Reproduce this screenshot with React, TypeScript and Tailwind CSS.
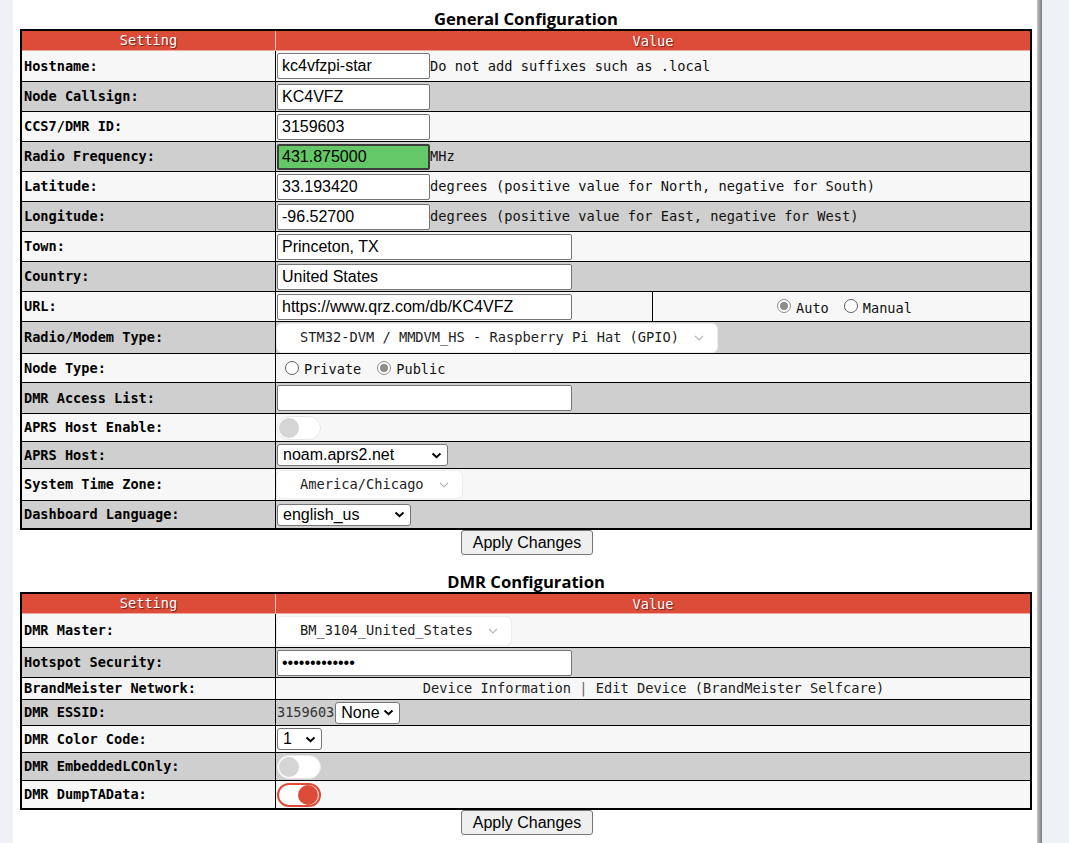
import React from "react";

const mono = "font-['DejaVu_Sans_Mono',monospace]";
const sans = "font-['Liberation_Sans',Arial,sans-serif]";

function Row({label, h, gray, first, children}: {label: string, h: string, gray?: boolean, first?: boolean, children?: React.ReactNode}) {
    return (
        <div className={`flex ${h} ${first ? '' : 'border-t border-black'} ${gray ? 'bg-[#cfcfcf]' : 'bg-[#f7f7f7]'}`}>
            <div className={`flex w-[254px] shrink-0 items-center border-r border-black pl-[2px] text-[13.6px] font-bold text-black ${mono}`}>
                {label}
            </div>
            <div className="flex min-w-0 flex-1 items-center pl-[1px]">{children}</div>
        </div>
    )
}

function TextInput({value, wide, green, password}: {value: string, wide?: boolean, green?: boolean, password?: boolean}) {
    return (
        <input
            type={password ? "password" : "text"}
            defaultValue={value}
            className={`h-[26px] shrink-0 rounded-[2px] text-[16px] text-black outline-none ${sans} ${wide ? 'w-[295px]' : 'w-[153px]'} ${green ? 'border-2 border-[#3d3d3d] bg-[#64c866] px-[3px]' : 'border border-[#767676] bg-white px-[4px]'}`}
        />
    )
}

function Desc({children}: {children: React.ReactNode}) {
    return <span className={`whitespace-pre text-[13.7px] text-[#111] ${mono}`}>{children}</span>
}

function Radio({checked, label}: {checked?: boolean, label: string}) {
    return (
        <span className="inline-flex items-center">
            <span className={`mr-[5px] inline-flex h-[14px] w-[14px] items-center justify-center rounded-full border bg-white ${checked ? 'border-[#8d8d8d]' : 'border-[#5f5f5f]'}`}>
                {checked ? <span className="h-[8px] w-[8px] rounded-full bg-[#8d8d8d]"/> : null}
            </span>
            <span className={`mt-[3px] text-[13.6px] text-[#111] ${mono}`}>{label}</span>
        </span>
    )
}

function Toggle({on}: {on?: boolean}) {
    return (
        <span className={`flex h-[24px] w-[44px] items-center rounded-full bg-white ${on ? 'justify-end border-2 border-[#dd4c39] pr-[1px]' : 'border border-[#e6e6e6] pl-[1px]'}`}>
            <span className={`h-[20px] w-[20px] rounded-full ${on ? 'bg-[#dd4c39]' : 'bg-[#d5d5d5]'}`}/>
        </span>
    )
}

function NativeSelect({value, w}: {value: string, w: string}) {
    return (
        <div className={`flex h-[22px] shrink-0 items-center justify-between rounded-[3px] border border-[#767676] bg-white pl-[5px] pr-[5px] ${w}`}>
            <span className={`text-[16px] leading-none text-black ${sans}`}>{value}</span>
            <svg width="11" height="7" viewBox="0 0 11 7">
                <polyline points="1.5,1.5 5.5,5.2 9.5,1.5" fill="none" stroke="#000" strokeWidth="2"/>
            </svg>
        </div>
    )
}

function FancySelect({value, h}: {value: string, h: string}) {
    return (
        <div className={`flex ${h} items-center rounded-[5px] bg-white pl-[23px] pr-[13px] shadow-[0_0_0_1px_#ececec]`}>
            <span className={`whitespace-pre text-[13.7px] text-[#222] ${mono}`}>{value}</span>
            <svg className="ml-[15px]" width="10" height="6" viewBox="0 0 10 6">
                <polyline points="1,0.8 5,4.8 9,0.8" fill="none" stroke="#b3b3b3" strokeWidth="1.2"/>
            </svg>
        </div>
    )
}

function Header() {
    return (
        <div className={`flex h-[20px] border-b border-[#eea89e] bg-[#dd4c39] text-[13.6px] text-white ${mono} [text-shadow:1px_1px_1px_rgba(0,0,0,0.55)]`}>
            <div className="flex w-[254px] shrink-0 items-center justify-center border-r border-[#f2c4bd]">Setting</div>
            <div className="flex flex-1 items-center justify-center pt-[1px]">Value</div>
        </div>
    )
}

function Title({children}: {children: React.ReactNode}) {
    return (
        <div className="pl-[2px] pt-[9px] text-center font-['Open_Sans',sans-serif] text-[16.6px] font-bold leading-[20px] text-black">
            {children}
        </div>
    )
}

function ApplyButton() {
    return (
        <div className="flex justify-center pl-[4px]">
            <button type="button"
                    className={`h-[25px] w-[132px] rounded-[3px] border border-[#767676] bg-[#efefef] text-[16px] leading-none text-black ${sans}`}>
                Apply Changes
            </button>
        </div>
    )
}

export default function App() {
    return (
        <div className="flex min-h-screen bg-[#eef2f7]">
            <div className="w-[13px] shrink-0"/>
            <div className="w-[1024px] shrink-0 bg-white">
                {/* General */}
                <Title>General Configuration</Title>
                <div className="ml-[7px] w-[1012px] border-2 border-black">
                    <Header/>
                    <Row label="Hostname:" h="h-[30px]" first>
                        <TextInput value="kc4vfzpi-star"/>
                        <Desc>Do not add suffixes such as .local</Desc>
                    </Row>
                    <Row label="Node Callsign:" h="h-[30px]" gray>
                        <TextInput value="KC4VFZ"/>
                    </Row>
                    <Row label="CCS7/DMR ID:" h="h-[30px]">
                        <TextInput value="3159603"/>
                    </Row>
                    <Row label="Radio Frequency:" h="h-[30px]" gray>
                        <TextInput value="431.875000" green/>
                        <Desc>MHz</Desc>
                    </Row>
                    <Row label="Latitude:" h="h-[30px]">
                        <TextInput value="33.193420"/>
                        <Desc>degrees (positive value for North, negative for South)</Desc>
                    </Row>
                    <Row label="Longitude:" h="h-[30px]" gray>
                        <TextInput value="-96.52700"/>
                        <Desc>degrees (positive value for East, negative for West)</Desc>
                    </Row>
                    <Row label="Town:" h="h-[30px]">
                        <TextInput value="Princeton, TX" wide/>
                    </Row>
                    <Row label="Country:" h="h-[30px]" gray>
                        <TextInput value="United States" wide/>
                    </Row>
                    <Row label="URL:" h="h-[30px]">
                        <div className="flex w-[376px] shrink-0 items-center self-stretch border-r border-black">
                            <TextInput value="https://www.qrz.com/db/KC4VFZ" wide/>
                        </div>
                        <div className="flex flex-1 items-center justify-center gap-[15px] pl-[6px]">
                            <Radio label="Auto" checked/>
                            <Radio label="Manual"/>
                        </div>
                    </Row>
                    <Row label="Radio/Modem Type:" h="h-[32px]" gray>
                        <FancySelect value="STM32-DVM / MMDVM_HS - Raspberry Pi Hat (GPIO)" h="h-[28px]"/>
                    </Row>
                    <Row label="Node Type:" h="h-[29px]">
                        <div className="flex items-center gap-[16px] pl-[8px]">
                            <Radio label="Private"/>
                            <Radio label="Public" checked/>
                        </div>
                    </Row>
                    <Row label="DMR Access List:" h="h-[31px]" gray>
                        <TextInput value="" wide/>
                    </Row>
                    <Row label="APRS Host Enable:" h="h-[28px]">
                        <Toggle/>
                    </Row>
                    <Row label="APRS Host:" h="h-[27px]" gray>
                        <NativeSelect value="noam.aprs2.net" w="w-[171px]"/>
                    </Row>
                    <Row label="System Time Zone:" h="h-[32px]">
                        <FancySelect value="America/Chicago" h="h-[27px]"/>
                    </Row>
                    <Row label="Dashboard Language:" h="h-[28px]" gray>
                        <NativeSelect value="english_us" w="w-[134px]"/>
                    </Row>
                </div>
                <ApplyButton/>

                {/* DMR */}
                <div className="mt-[8px]">
                    <Title>DMR Configuration</Title>
                    <div className="ml-[7px] w-[1012px] border-2 border-black">
                        <Header/>
                        <Row label="DMR Master:" h="h-[33px]" first>
                            <FancySelect value="BM_3104_United_States" h="h-[28px]"/>
                        </Row>
                        <Row label="Hotspot Security:" h="h-[30px]" gray>
                            <TextInput value="abcdefghijklm" wide password/>
                        </Row>
                        <Row label="BrandMeister Network:" h="h-[22px]">
                            <div className={`w-full text-center text-[13.7px] text-[#222] ${mono}`}>
                                Device Information <span className="text-[#666]">|</span> Edit Device (BrandMeister Selfcare)
                            </div>
                        </Row>
                        <Row label="DMR ESSID:" h="h-[26px]" gray>
                            <span className={`mr-[1px] text-[13.6px] text-[#333] ${mono}`}>3159603</span>
                            <NativeSelect value="None" w="w-[65px]"/>
                        </Row>
                        <Row label="DMR Color Code:" h="h-[27px]">
                            <NativeSelect value="1" w="w-[45px]"/>
                        </Row>
                        <Row label="DMR EmbeddedLCOnly:" h="h-[28px]" gray>
                            <Toggle/>
                        </Row>
                        <Row label="DMR DumpTAData:" h="h-[28px]">
                            <Toggle on/>
                        </Row>
                    </div>
                    <ApplyButton/>
                </div>
            </div>
            <div className="w-[5px] shrink-0 bg-linear-to-r from-[#c4c4c4] to-[#7c7c7c]"/>
        </div>
    )
}
